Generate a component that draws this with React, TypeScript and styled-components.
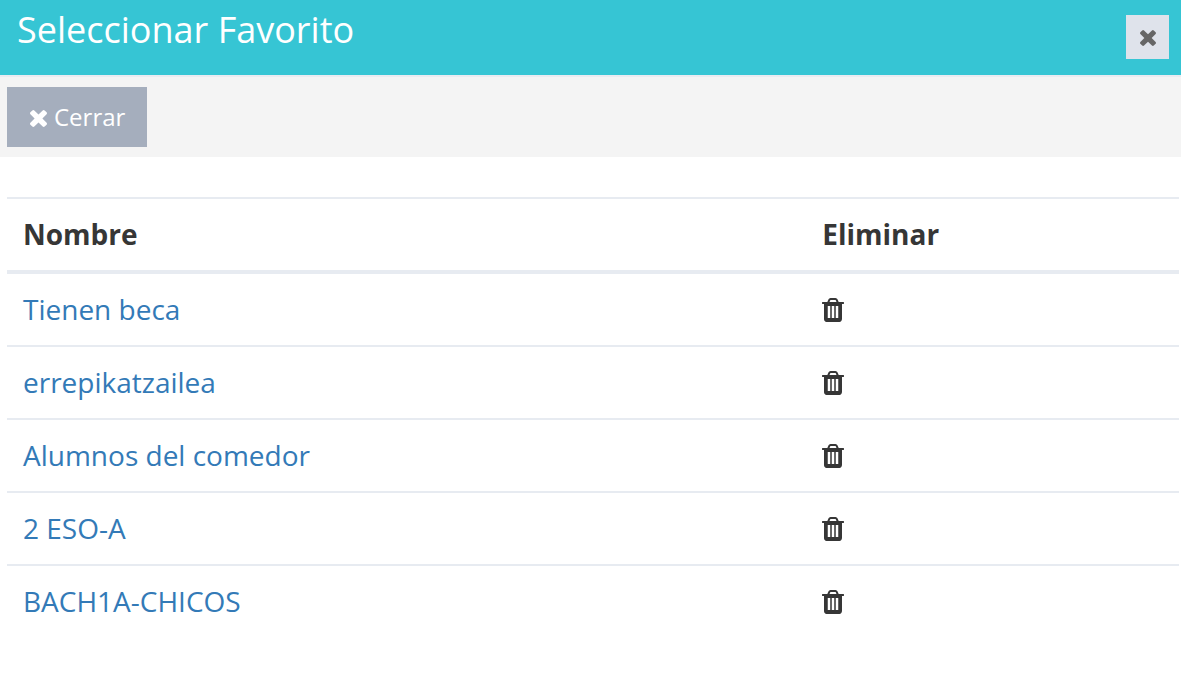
import React from "react";
import styled, { createGlobalStyle } from "styled-components";

const GlobalStyle = createGlobalStyle`
  *, *::before, *::after { box-sizing: border-box; }
  body {
    margin: 0;
    background: #ffffff;
    color: #363636;
    font-family: "Open Sans", "Noto Sans", sans-serif;
    font-size: 28px;
    line-height: 40px;
  }
`;

const Header = styled.header`
  display: flex;
  justify-content: space-between;
  align-items: flex-start;
  height: 75px;
  padding: 0 12px 0 17px;
  background: #36c5d4;
`;

const Title = styled.h1`
  margin: 0;
  padding-top: 4px;
  color: #ffffff;
  font-size: 36px;
  font-weight: 400;
  line-height: 52px;
`;

const CloseButton = styled.button`
  display: flex;
  align-items: center;
  justify-content: center;
  width: 43px;
  height: 44px;
  margin-top: 15px;
  padding: 2px 0 0;
  border: 0;
  background: #dfe3eb;
  color: #666666;
  cursor: pointer;
`;

const Toolbar = styled.div`
  padding: 10px 7px;
  border-top: 2px solid #e9ebf1;
  background: #f4f4f4;
`;

const DismissButton = styled.button`
  display: flex;
  align-items: center;
  gap: 7px;
  height: 60px;
  padding: 0 22px 0 23px;
  border: 0;
  background: #a5aebd;
  color: #ffffff;
  font-family: inherit;
  font-size: 24px;
  line-height: 36px;
  cursor: pointer;

  svg { margin-top: 2px; }
`;

const Content = styled.main`
  padding: 40px 2px 40px 7px;
`;

const Table = styled.table`
  width: 100%;
  table-layout: fixed;
  border-collapse: separate;
  border-spacing: 0;
`;

const HeadCell = styled.th<{ $width?: string }>`
  width: ${(p) => p.$width ?? "auto"};
  height: 77px;
  padding: 0 16px 2px;
  border-top: 2px solid #e7ebf1;
  border-bottom: 4px solid #e7ebf1;
  font-weight: 700;
  text-align: left;
`;

const Row = styled.tr`
  & + & td { border-top: 2px solid #e7ebf1; height: 73px; }
`;

const Cell = styled.td`
  height: 71px;
  padding: 0 16px;
`;

const NameCell = styled(Cell)`
  padding-bottom: 2px;
`;

const NameLink = styled.a`
  color: #337ab7;
  text-decoration: none;
`;

const DeleteButton = styled.button`
  display: flex;
  padding: 0;
  border: 0;
  background: transparent;
  color: #363636;
  cursor: pointer;
`;

const Icon = styled.svg`
  display: block;
  flex: none;
  fill: currentColor;
`;

const CrossIcon = ({ size }: { size: number }) => (
  <Icon width={size} height={size} viewBox="302 366 1188 1188" aria-hidden="true">
    <path d="M1490 1322q0 40-28 68l-136 136q-28 28-68 28t-68-28l-294-294-294 294q-28 28-68 28t-68-28l-136-136q-28-28-28-68t28-68l294-294-294-294q-28-28-28-68t28-68l136-136q28-28 68-28t68 28l294 294 294-294q28-28 68-28t68 28l136 136q28 28 28 68t-28 68l-294 294 294 294q28 28 28 68z" />
  </Icon>
);

const TrashIcon = () => (
  <Icon width={22} height={28} viewBox="192 0 1408 1792" aria-hidden="true">
    <path
      fillRule="evenodd"
      d="M560 640h160v768h-160zM816 640h160v768h-160zM1072 640h160v768h-160zM672 384h448l-48-117q-7-9-17-11h-317q-10 2-17 11zM1600 416v64q0 14-9 23t-23 9h-96v948q0 83-47 143.500t-113 60.500h-832q-66 0-113-58.500t-47-141.500v-952h-96q-14 0-23-9t-9-23v-64q0-14 9-23t23-9h309l70-167q15-37 54-63t79-26h320q40 0 79 26t54 63l70 167h309q14 0 23 9t9 23z"
    />
  </Icon>
);

const favorites = [
  "Tienen beca",
  "errepikatzailea",
  "Alumnos del comedor",
  "2 ESO-A",
  "BACH1A-CHICOS",
];

export default function App() {
  return (
    <>
      <GlobalStyle />
      <Header>
        <Title>Seleccionar Favorito</Title>
        <CloseButton type="button" aria-label="Cerrar ventana">
          <CrossIcon size={16} />
        </CloseButton>
      </Header>
      <Toolbar>
        <DismissButton type="button">
          <CrossIcon size={17} />
          Cerrar
        </DismissButton>
      </Toolbar>
      <Content>
        <Table>
          <thead>
            <tr>
              <HeadCell scope="col" $width="68.2%">Nombre</HeadCell>
              <HeadCell scope="col">Eliminar</HeadCell>
            </tr>
          </thead>
          <tbody>
            {favorites.map((name) => (
              <Row key={name}>
                <NameCell>
                  <NameLink href="#">{name}</NameLink>
                </NameCell>
                <Cell>
                  <DeleteButton type="button" aria-label={`Eliminar ${name}`}>
                    <TrashIcon />
                  </DeleteButton>
                </Cell>
              </Row>
            ))}
          </tbody>
        </Table>
      </Content>
    </>
  );
}
